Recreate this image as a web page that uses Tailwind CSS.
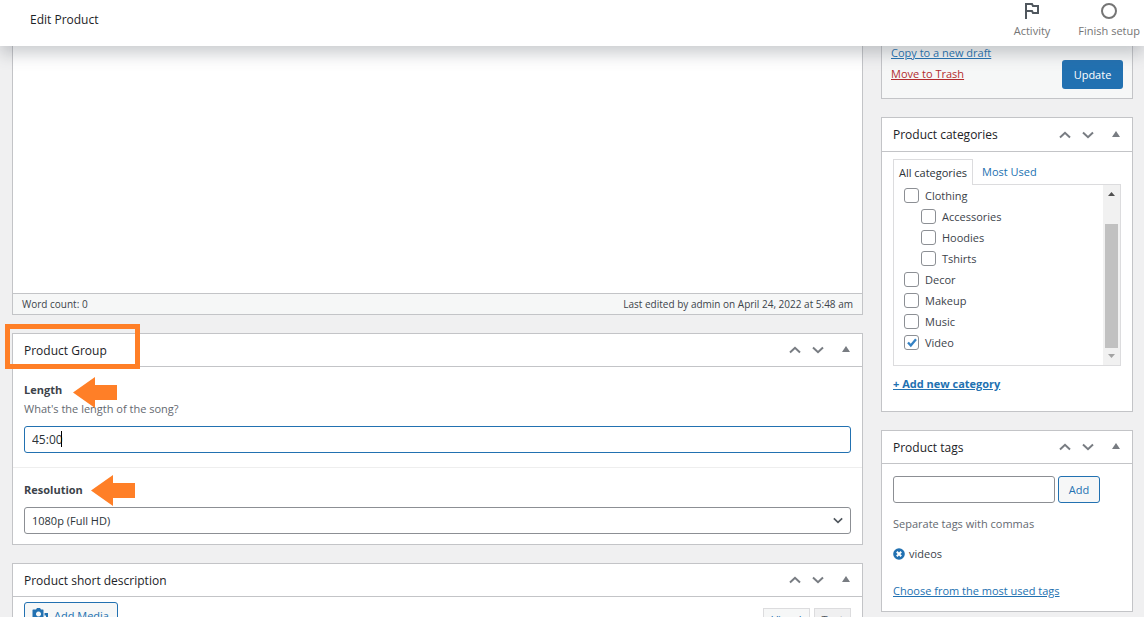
<!DOCTYPE html>
<html lang="en">

<head>
  <meta charset="UTF-8" />
  <meta name="viewport" content="width=device-width, initial-scale=1.0" />
  <title>Edit Product</title>
  <script src="https://cdn.jsdelivr.net/npm/@tailwindcss/browser@4"></script>
</head>

<body class="h-screen overflow-hidden bg-[#f0f0f1] font-['Open_Sans',sans-serif] text-[11px] leading-5 text-[#3c434a]">
  <!-- shared icons -->
  <svg class="hidden">
    <symbol id="up" viewBox="0 0 12 8"><path d="M1 6.5 6 1.8l5 4.7" fill="none" stroke="currentColor" stroke-width="2" /></symbol>
    <symbol id="down" viewBox="0 0 12 8"><path d="M1 1.5 6 6.2l5-4.7" fill="none" stroke="currentColor" stroke-width="2" /></symbol>
    <symbol id="toggle" viewBox="0 0 8 6"><path d="M4 0l4 6H0z" fill="currentColor" /></symbol>
    <symbol id="arrow" viewBox="0 0 44 31"><path d="M0 15.500 22 0v8h22v15H22v8z" fill="#ff7f27" /></symbol>
  </svg>

  <header class="relative z-10 flex h-[46px] items-start justify-between bg-white pl-[30px] pr-1 shadow-[0_8px_16px_0_rgba(85,93,102,0.3)]">
    <h1 class="pt-[9px] text-xs leading-[21px] font-medium text-[#1d2327]">Edit Product</h1>
    <div class="flex gap-7 text-[#757575]">
      <button type="button" class="flex flex-col items-center gap-px pt-[2px]">
        <svg class="h-[18px] w-[18px] text-[#50575e]" viewBox="0 0 18 18" fill="none" stroke="currentColor" stroke-width="2"><path d="M3 17V2h6l1 2h5v7h-5l-1-2H3" /></svg>
        <span>Activity</span>
      </button>
      <button type="button" class="flex flex-col items-center gap-px pt-[2px]">
        <svg class="h-[18px] w-[18px]" viewBox="0 0 18 18" fill="none" stroke="currentColor" stroke-width="2"><circle cx="9" cy="9" r="7" /></svg>
        <span>Finish setup</span>
      </button>
    </div>
  </header>

  <div class="flex items-start gap-[18px] pl-3 pr-[11px]">
    <main class="flex min-w-0 flex-1 flex-col gap-[18px]">
      <section class="border border-t-0 border-[#c3c4c7] bg-white">
        <textarea aria-label="Product description" class="block h-[247px] w-full resize-none outline-none"></textarea>
        <div class="flex justify-between border-t border-[#c3c4c7] bg-[#f6f7f7] px-[9px] text-[10px]">
          <span>Word count: 0</span>
          <span>Last edited by admin on April 24, 2022 at 5:48 am</span>
        </div>
      </section>

      <section class="relative border border-[#c3c4c7] bg-white">
        <div class="pointer-events-none absolute -left-2 -top-[10px] h-[45px] w-[135px] border-5 border-[#ff7f27]"></div>
        <div class="flex h-[33px] items-center justify-between border-b border-[#c3c4c7] pl-[11px] text-[#787c82]">
          <h2 class="text-xs leading-[21px] font-medium text-[#1d2327]">Product Group</h2>
          <div class="flex">
            <button type="button" aria-label="Move up" class="flex w-[23px] justify-center"><svg class="h-2 w-3"><use href="#up" /></svg></button>
            <button type="button" aria-label="Move down" class="flex w-[23px] justify-center"><svg class="h-2 w-3"><use href="#down" /></svg></button>
            <button type="button" aria-label="Toggle panel" class="flex w-[33px] justify-center"><svg class="h-[6px] w-2"><use href="#toggle" /></svg></button>
          </div>
        </div>
        <div class="border-b border-[#eee] px-[11px] pb-[14px] pt-[13px]">
          <div class="relative w-fit">
            <label for="length" class="block font-bold">Length</label>
            <svg class="absolute -top-[3px] left-full ml-[11px] h-[31px] w-11"><use href="#arrow" /></svg>
          </div>
          <p class="leading-[18px] text-[#646970]">What's the length of the song?</p>
          <div class="relative mt-2">
            <input id="length" type="text" value="45:00" class="block h-[27px] w-full rounded-[3px] border border-[#2271b1] bg-white px-[7px] text-xs text-[#2c3338] outline-none" />
            <span class="absolute left-[37px] top-[5px] h-4 w-px bg-black"></span>
          </div>
        </div>
        <div class="px-[11px] pb-[10px] pt-3">
          <div class="relative w-fit">
            <label for="resolution" class="block font-bold">Resolution</label>
            <svg class="absolute -top-[5px] left-full ml-2 h-[31px] w-11"><use href="#arrow" /></svg>
          </div>
          <div class="relative mt-[7px]">
            <select id="resolution" class="block h-[27px] w-full appearance-none rounded-[3px] border border-[#8c8f94] bg-white px-[7px] text-[#2c3338]">
              <option>1080p (Full HD)</option>
            </select>
            <svg class="pointer-events-none absolute right-2 top-[10px] h-[7px] w-[10px] text-[#50575e]"><use href="#down" /></svg>
          </div>
        </div>
      </section>

      <section class="border border-[#c3c4c7] bg-white">
        <div class="flex h-[33px] items-center justify-between border-b border-[#c3c4c7] pl-[11px] text-[#787c82]">
          <h2 class="text-xs leading-[21px] font-medium text-[#1d2327]">Product short description</h2>
          <div class="flex">
            <button type="button" aria-label="Move up" class="flex w-[23px] justify-center"><svg class="h-2 w-3"><use href="#up" /></svg></button>
            <button type="button" aria-label="Move down" class="flex w-[23px] justify-center"><svg class="h-2 w-3"><use href="#down" /></svg></button>
            <button type="button" aria-label="Toggle panel" class="flex w-[33px] justify-center"><svg class="h-[6px] w-2"><use href="#toggle" /></svg></button>
          </div>
        </div>
        <div class="flex items-start justify-between px-[11px] pt-[5px]">
          <button type="button" class="flex h-[27px] w-[94px] items-center gap-1 rounded-[3px] border border-[#2271b1] bg-[#f6f7f7] pl-[7px] text-[#2271b1]">
            <svg class="h-[18px] w-[18px]" viewBox="0 0 18 18" fill="currentColor"><path fill-rule="evenodd" d="M4 2.500 5 1h3l1 1.500h2l.5.5v9H.500V3l.5-.5zM6.500 4.500a2.500 2.500 0 1 0 .01 0z" /><path d="M12.500 6h3.500v9a2 2 0 1 1-2-2V8.500h-1.500z" /></svg>
            Add Media
          </button>
          <div class="flex gap-1 pt-[6px]">
            <button type="button" class="h-6 w-[47px] border border-[#dcdcde] bg-[#f6f7f7] text-[#2271b1]">Visual</button>
            <button type="button" class="h-6 w-[37px] border border-[#dcdcde] bg-[#f0f0f1] text-[#50575e]">Text</button>
          </div>
        </div>
        <textarea aria-label="Short description" class="block h-24 w-full resize-none outline-none"></textarea>
      </section>
    </main>

    <aside class="flex w-[252px] flex-col gap-[18px]">
      <section class="flex items-start justify-between border border-t-0 border-[#c3c4c7] bg-[#f6f7f7] px-[9px] pb-[9px]">
        <div class="-mt-[3px] flex flex-col gap-px">
          <a href="#" class="text-[#2271b1] underline">Copy to a new draft</a>
          <a href="#" class="text-[#b32d2e] underline">Move to Trash</a>
        </div>
        <button type="button" class="mt-[14px] h-[29px] w-[61px] rounded-[3px] bg-[#2271b1] font-medium text-white">Update</button>
      </section>

      <section class="border border-[#c3c4c7] bg-white">
        <div class="flex h-[34px] items-center justify-between border-b border-[#c3c4c7] pl-[11px] text-[#787c82]">
          <h2 class="text-xs leading-[21px] font-medium text-[#1d2327]">Product categories</h2>
          <div class="flex">
            <button type="button" aria-label="Move up" class="flex w-[23px] justify-center"><svg class="h-2 w-3"><use href="#up" /></svg></button>
            <button type="button" aria-label="Move down" class="flex w-[23px] justify-center"><svg class="h-2 w-3"><use href="#down" /></svg></button>
            <button type="button" aria-label="Toggle panel" class="flex w-[33px] justify-center"><svg class="h-[6px] w-2"><use href="#toggle" /></svg></button>
          </div>
        </div>
        <div class="px-[11px] pb-[17px] pt-[7px]">
          <div class="flex">
            <a href="#" class="relative -mb-px flex h-[26px] w-20 items-center justify-center border border-b-0 border-[#dcdcde] bg-white text-[#2c3338]">All categories</a>
            <a href="#" class="flex h-[25px] items-center px-[9px] text-[#2271b1]">Most Used</a>
          </div>
          <div class="flex h-[182px] border border-[#dcdcde]">
            <div class="flex flex-1 flex-col overflow-hidden pl-[10px] leading-[21px]">
              <label class="flex items-center gap-[6px]"><input type="checkbox" class="h-[15px] w-[15px] appearance-none rounded-[3px] border border-[#8c8f94] bg-white" />Clothing</label>
              <label class="flex items-center gap-[6px] pl-[17px]"><input type="checkbox" class="h-[15px] w-[15px] appearance-none rounded-[3px] border border-[#8c8f94] bg-white" />Accessories</label>
              <label class="flex items-center gap-[6px] pl-[17px]"><input type="checkbox" class="h-[15px] w-[15px] appearance-none rounded-[3px] border border-[#8c8f94] bg-white" />Hoodies</label>
              <label class="flex items-center gap-[6px] pl-[17px]"><input type="checkbox" class="h-[15px] w-[15px] appearance-none rounded-[3px] border border-[#8c8f94] bg-white" />Tshirts</label>
              <label class="flex items-center gap-[6px]"><input type="checkbox" class="h-[15px] w-[15px] appearance-none rounded-[3px] border border-[#8c8f94] bg-white" />Decor</label>
              <label class="flex items-center gap-[6px]"><input type="checkbox" class="h-[15px] w-[15px] appearance-none rounded-[3px] border border-[#8c8f94] bg-white" />Makeup</label>
              <label class="flex items-center gap-[6px]"><input type="checkbox" class="h-[15px] w-[15px] appearance-none rounded-[3px] border border-[#8c8f94] bg-white" />Music</label>
              <label class="relative flex items-center gap-[6px]">
                <input type="checkbox" checked class="h-[15px] w-[15px] appearance-none rounded-[3px] border border-[#8c8f94] bg-white" />Video
                <svg class="pointer-events-none absolute left-[3px] top-[6px] h-[10px] w-[10px]" viewBox="0 0 10 10"><path d="M1 4.500 3.800 7.500 9 1.200" fill="none" stroke="#3582c4" stroke-width="2.300" /></svg>
              </label>
            </div>
            <!-- scrollbar -->
            <div class="flex w-[17px] flex-col items-center bg-[#f1f1f1]">
              <svg class="mt-[7px] h-1 w-[7px]" viewBox="0 0 7 4"><path d="M3.500 0 7 4H0z" fill="#505050" /></svg>
              <div class="mt-7 h-[124px] w-[13px] bg-[#c1c1c1]"></div>
              <svg class="mt-[6px] h-1 w-[7px]" viewBox="0 0 7 4"><path d="M0 0h7L3.500 4z" fill="#a3a3a3" /></svg>
            </div>
          </div>
          <a href="#" class="mt-2 block w-fit font-bold text-[#2271b1] underline">+ Add new category</a>
        </div>
      </section>

      <section class="border border-[#c3c4c7] bg-white">
        <div class="flex h-[33px] items-center justify-between border-b border-[#c3c4c7] pl-[11px] text-[#787c82]">
          <h2 class="text-xs leading-[21px] font-medium text-[#1d2327]">Product tags</h2>
          <div class="flex">
            <button type="button" aria-label="Move up" class="flex w-[23px] justify-center"><svg class="h-2 w-3"><use href="#up" /></svg></button>
            <button type="button" aria-label="Move down" class="flex w-[23px] justify-center"><svg class="h-2 w-3"><use href="#down" /></svg></button>
            <button type="button" aria-label="Toggle panel" class="flex w-[33px] justify-center"><svg class="h-[6px] w-2"><use href="#toggle" /></svg></button>
          </div>
        </div>
        <div class="px-[11px] pb-[10px] pt-3">
          <div class="flex gap-[3px]">
            <input type="text" aria-label="Add new tag" class="h-[27px] w-[162px] rounded-[3px] border border-[#8c8f94] px-2 outline-none" />
            <button type="button" class="h-[27px] w-[42px] rounded-[3px] border border-[#2271b1] bg-[#f6f7f7] text-[#2271b1]">Add</button>
          </div>
          <p class="mt-[11px] text-[#646970]">Separate tags with commas</p>
          <div class="mt-[10px] flex items-center gap-1">
            <button type="button" aria-label="Remove videos"><svg class="block h-3 w-3" viewBox="0 0 12 12"><circle cx="6" cy="6" r="5.800" fill="#2271b1" /><path d="M3.800 3.800l4.400 4.400M8.200 3.800 3.800 8.200" stroke="#fff" stroke-width="2" /></svg></button>
            <span>videos</span>
          </div>
          <a href="#" class="mt-[17px] block w-fit text-[#2271b1] underline">Choose from the most used tags</a>
        </div>
      </section>
    </aside>
  </div>
</body>

</html>
